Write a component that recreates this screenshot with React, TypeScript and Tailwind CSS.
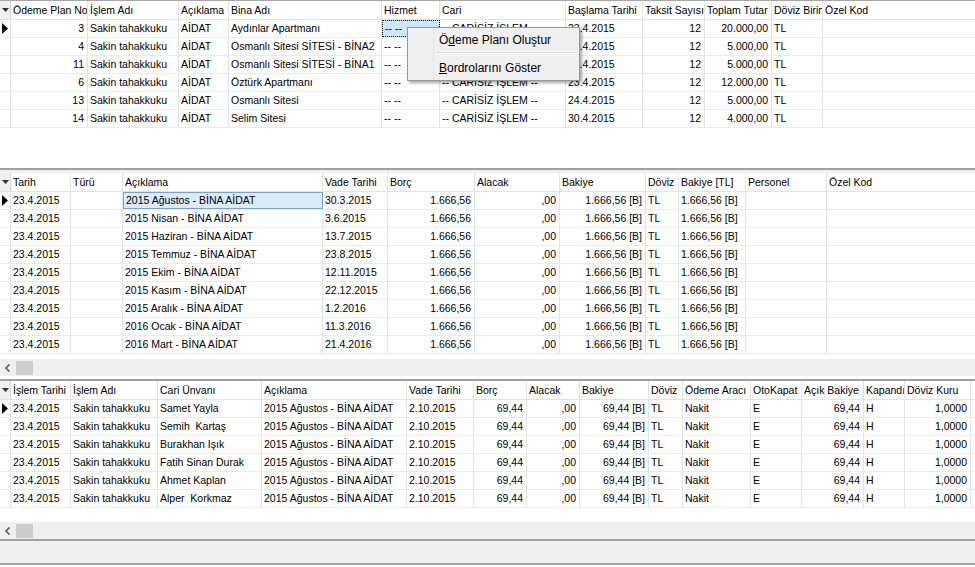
type Col = { t: string; w: string; r?: boolean };

const topCols: Col[] = [
  { t: "Ödeme Plan No", w: "w-[77px]", r: true },
  { t: "İşlem Adı", w: "w-[91px]" },
  { t: "Açıklama", w: "w-[50px]" },
  { t: "Bina Adı", w: "w-[153px]" },
  { t: "Hizmet", w: "w-[58px]" },
  { t: "Cari", w: "w-[126px]" },
  { t: "Başlama Tarihi", w: "w-[77px]" },
  { t: "Taksit Sayısı", w: "w-[62px]", r: true },
  { t: "Toplam Tutar", w: "w-[67px]", r: true },
  { t: "Döviz Birimi", w: "w-[51px]" },
  { t: "Özel Kod", w: "w-[160px]" },
];

const topRows = [
  ["3", "Sakin tahakkuku", "AİDAT", "Aydınlar Apartmanı", "-- --", "-- CARİSİZ İŞLEM --", "23.4.2015", "12", "20.000,00", "TL", ""],
  ["4", "Sakin tahakkuku", "AİDAT", "Osmanlı Sitesi SİTESİ - BİNA2", "-- --", "-- CARİSİZ İŞLEM --", "23.4.2015", "12", "5.000,00", "TL", ""],
  ["11", "Sakin tahakkuku", "AİDAT", "Osmanlı Sitesi SİTESİ - BİNA1", "-- --", "-- CARİSİZ İŞLEM --", "23.4.2015", "12", "5.000,00", "TL", ""],
  ["6", "Sakin tahakkuku", "AİDAT", "Öztürk Apartmanı", "-- --", "-- CARİSİZ İŞLEM --", "23.4.2015", "12", "12.000,00", "TL", ""],
  ["13", "Sakin tahakkuku", "AİDAT", "Osmanlı Sitesi", "-- --", "-- CARİSİZ İŞLEM --", "24.4.2015", "12", "5.000,00", "TL", ""],
  ["14", "Sakin tahakkuku", "AİDAT", "Selim Sitesi", "-- --", "-- CARİSİZ İŞLEM --", "30.4.2015", "12", "4.000,00", "TL", ""],
];

const midCols: Col[] = [
  { t: "Tarih", w: "w-[60px]" },
  { t: "Türü", w: "w-[52px]" },
  { t: "Açıklama", w: "w-[200px]" },
  { t: "Vade Tarihi", w: "w-[65px]" },
  { t: "Borç", w: "w-[87px]", r: true },
  { t: "Alacak", w: "w-[85px]", r: true },
  { t: "Bakiye", w: "w-[86px]", r: true },
  { t: "Döviz", w: "w-[33px]" },
  { t: "Bakiye [TL]", w: "w-[67px]" },
  { t: "Personel", w: "w-[81px]" },
  { t: "Özel Kod", w: "w-[160px]" },
];

const months = [
  ["2015 Ağustos", "30.3.2015"],
  ["2015 Nisan", "3.6.2015"],
  ["2015 Haziran", "13.7.2015"],
  ["2015 Temmuz", "23.8.2015"],
  ["2015 Ekim", "12.11.2015"],
  ["2015 Kasım", "22.12.2015"],
  ["2015 Aralık", "1.2.2016"],
  ["2016 Ocak", "11.3.2016"],
  ["2016 Mart", "21.4.2016"],
];

const midRows = months.map(([m, d]) => [
  "23.4.2015", "", `${m} - BİNA AİDAT`, d, "1.666,56", ",00", "1.666,56 [B]", "TL", "1.666,56 [B]", "", "",
]);

const botCols: Col[] = [
  { t: "İşlem Tarihi", w: "w-[60px]" },
  { t: "İşlem Adı", w: "w-[87px]" },
  { t: "Cari Ünvanı", w: "w-[104px]" },
  { t: "Açıklama", w: "w-[145px]" },
  { t: "Vade Tarihi", w: "w-[67px]" },
  { t: "Borç", w: "w-[53px]", r: true },
  { t: "Alacak", w: "w-[53px]", r: true },
  { t: "Bakiye", w: "w-[69px]", r: true },
  { t: "Döviz", w: "w-[34px]" },
  { t: "Ödeme Aracı", w: "w-[68px]" },
  { t: "OtoKapat", w: "w-[51px]" },
  { t: "Açık Bakiye", w: "w-[62px]", r: true },
  { t: "Kapandı", w: "w-[41px]" },
  { t: "Döviz Kuru", w: "w-[66px]", r: true },
];

const people = ["Samet Yayla", "Semih  Kartaş", "Burakhan Işık", "Fatih Sinan Durak", "Ahmet Kaplan", "Alper  Korkmaz"];

const botRows = people.map((p) => [
  "23.4.2015", "Sakin tahakkuku", p, "2015 Ağustos - BİNA AİDAT", "2.10.2015", "69,44", ",00", "69,44 [B]", "TL", "Nakit", "E", "69,44", "H", "1,0000",
]);

const Grid = ({
  cols,
  rows,
  selCol,
  selCls,
}: {
  cols: Col[];
  rows: string[][];
  selCol: number;
  selCls: string;
}) => (
  <div className="flex flex-col">
    <div className="flex h-[19px] border-b border-[#e3e3e3]">
      <div className="w-[11px] shrink-0 border-r border-[#d5d5d5] bg-[#f0f0f0] flex items-center justify-center">
        <svg width="7" height="4" viewBox="0 0 7 4">
          <path d="M0 0h7L3.5 4z" fill="#333" />
        </svg>
      </div>
      {cols.map((c, i) => (
        <div
          key={i}
          className={`${c.w} shrink-0 border-r border-[#e3e3e3] pl-[2px] pt-[1px] flex items-center overflow-hidden whitespace-nowrap`}
        >
          {c.t}
        </div>
      ))}
    </div>
    {rows.map((row, ri) => (
      <div key={ri} className="flex h-[18px] border-b border-[#ebebeb]">
        <div className="w-[11px] shrink-0 border-r border-[#e3e3e3] flex items-center pl-[2px]">
          {ri === 0 && (
            <svg width="6" height="11" viewBox="0 0 6 11">
              <path d="M0 0l6 5.5L0 11z" fill="#000" />
            </svg>
          )}
        </div>
        {row.map((v, ci) => {
          const c = cols[ci];
          const sel = ri === 0 && ci === selCol;
          return (
            <div
              key={ci}
              className={`${c.w} shrink-0 flex items-center pt-[1px] overflow-hidden whitespace-pre ${
                c.r ? "justify-end pr-[3px]" : "pl-[2px]"
              } ${sel ? selCls : "border-r border-[#e3e3e3]"}`}
            >
              {v}
            </div>
          );
        })}
      </div>
    ))}
  </div>
);

const Scrollbar = () => (
  <div className="flex h-[17px] bg-[#f0f0f0] items-center">
    <div className="w-[16px] h-full flex items-center justify-center">
      <svg width="6" height="8" viewBox="0 0 6 8">
        <path d="M4.5 0.5L1 4l3.5 3.5" stroke="#606060" strokeWidth="1.6" fill="none" />
      </svg>
    </div>
    <div className="w-[17px] h-[14px] bg-[#cdcdcd]" />
  </div>
);

export default function App() {
  return (
    <div className="relative h-[567px] w-[975px] overflow-hidden bg-white text-[10.5px] text-black font-['Liberation_Sans',sans-serif] flex flex-col">
      <div className="h-[168px] shrink-0 border-t border-[#a8a8a8]">
        <Grid
          cols={topCols}
          rows={topRows}
          selCol={4}
          selCls="bg-[#cce8ff] border border-dotted border-black"
        />
      </div>
      <div className="h-[2px] shrink-0 bg-[#a0a0a0]" />
      <div className="h-[3px] shrink-0 bg-[#f0f0f0]" />
      <div className="h-[206px] shrink-0 flex flex-col">
        <Grid
          cols={midCols}
          rows={midRows}
          selCol={2}
          selCls="bg-[#dcebfc] border border-[#7da2ce]"
        />
        <div className="h-[5px]" />
        <Scrollbar />
      </div>
      <div className="h-[2px] shrink-0 bg-[#a0a0a0]" />
      <div className="h-[158px] shrink-0 flex flex-col">
        <Grid cols={botCols} rows={botRows} selCol={-1} selCls="" />
        <div className="h-[14px]" />
        <Scrollbar />
      </div>
      <div className="h-[2px] shrink-0 bg-[#a0a0a0]" />
      <div className="h-[24px] shrink-0 bg-[#f0f0f0] border-b-2 border-[#a0a0a0]" />

      <div className="absolute left-[407px] top-[27px] w-[173px] h-[54px] bg-[#f0f0f0] border border-[#979797] shadow-[2px_2px_3px_rgba(0,0,0,0.35)] flex">
        <div className="w-[26px] shrink-0 border-r border-[#e2e3e3]" />
        <div className="flex-1 flex flex-col pt-[1px] text-[12px]">
          <div className="h-[22px] flex items-center pl-[5px]">
            Ö<span className="underline">d</span>eme Planı Oluştur
          </div>
          <div className="h-[2px] mt-[1px] mb-[3px] mx-[2px] bg-[#e0e0e0] border-b border-white" />
          <div className="h-[22px] flex items-center pl-[5px]">
            <span className="underline">B</span>ordrolarını Göster
          </div>
        </div>
      </div>
    </div>
  );
}
